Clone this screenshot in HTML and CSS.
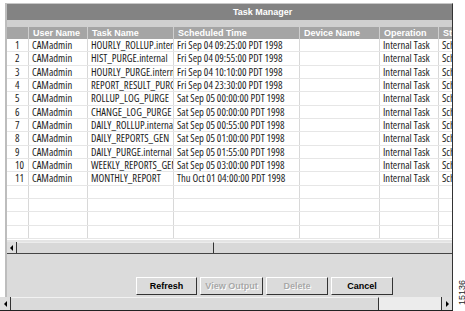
FILE: index.html
```html
<!DOCTYPE html>
<html lang="en">
<head>
    <meta charset="UTF-8">
    <title>Task Manager</title>
    <link rel="stylesheet" href="styles.css">
</head>
<body>
<div class="screen">
    <div class="frame">
        <div class="window">
            <div class="titlebar">Task Manager</div>
            <div class="strip"></div>

            <!-- task list -->
            <div class="table-view">
                <div class="row head">
                    <div class="cell"></div>
                    <div class="cell">User Name</div>
                    <div class="cell">Task Name</div>
                    <div class="cell">Scheduled Time</div>
                    <div class="cell">Device Name</div>
                    <div class="cell">Operation</div>
                    <div class="cell">Status</div>
                </div>
                <div class="row"><div class="cell num">1</div><div class="cell">CAMadmin</div><div class="cell">HOURLY_ROLLUP.internal</div><div class="cell">Fri Sep 04 09:25:00 PDT 1998</div><div class="cell"></div><div class="cell">Internal Task</div><div class="cell">Scheduled</div></div>
                <div class="row"><div class="cell num">2</div><div class="cell">CAMadmin</div><div class="cell">HIST_PURGE.internal</div><div class="cell">Fri Sep 04 09:55:00 PDT 1998</div><div class="cell"></div><div class="cell">Internal Task</div><div class="cell">Scheduled</div></div>
                <div class="row"><div class="cell num">3</div><div class="cell">CAMadmin</div><div class="cell">HOURLY_PURGE.internal</div><div class="cell">Fri Sep 04 10:10:00 PDT 1998</div><div class="cell"></div><div class="cell">Internal Task</div><div class="cell">Scheduled</div></div>
                <div class="row"><div class="cell num">4</div><div class="cell">CAMadmin</div><div class="cell">REPORT_RESULT_PURGE</div><div class="cell">Fri Sep 04 23:30:00 PDT 1998</div><div class="cell"></div><div class="cell">Internal Task</div><div class="cell">Scheduled</div></div>
                <div class="row"><div class="cell num">5</div><div class="cell">CAMadmin</div><div class="cell">ROLLUP_LOG_PURGE</div><div class="cell">Sat Sep 05 00:00:00 PDT 1998</div><div class="cell"></div><div class="cell">Internal Task</div><div class="cell">Scheduled</div></div>
                <div class="row"><div class="cell num">6</div><div class="cell">CAMadmin</div><div class="cell">CHANGE_LOG_PURGE</div><div class="cell">Sat Sep 05 00:00:00 PDT 1998</div><div class="cell"></div><div class="cell">Internal Task</div><div class="cell">Scheduled</div></div>
                <div class="row"><div class="cell num">7</div><div class="cell">CAMadmin</div><div class="cell">DAILY_ROLLUP.internal</div><div class="cell">Sat Sep 05 00:55:00 PDT 1998</div><div class="cell"></div><div class="cell">Internal Task</div><div class="cell">Scheduled</div></div>
                <div class="row"><div class="cell num">8</div><div class="cell">CAMadmin</div><div class="cell">DAILY_REPORTS_GEN</div><div class="cell">Sat Sep 05 01:00:00 PDT 1998</div><div class="cell"></div><div class="cell">Internal Task</div><div class="cell">Scheduled</div></div>
                <div class="row"><div class="cell num">9</div><div class="cell">CAMadmin</div><div class="cell">DAILY_PURGE.internal</div><div class="cell">Sat Sep 05 01:55:00 PDT 1998</div><div class="cell"></div><div class="cell">Internal Task</div><div class="cell">Scheduled</div></div>
                <div class="row"><div class="cell num">10</div><div class="cell">CAMadmin</div><div class="cell">WEEKLY_REPORTS_GEN</div><div class="cell">Sat Sep 05 03:00:00 PDT 1998</div><div class="cell"></div><div class="cell">Internal Task</div><div class="cell">Scheduled</div></div>
                <div class="row"><div class="cell num">11</div><div class="cell">CAMadmin</div><div class="cell">MONTHLY_REPORT</div><div class="cell">Thu Oct 01 04:00:00 PDT 1998</div><div class="cell"></div><div class="cell">Internal Task</div><div class="cell">Scheduled</div></div>
                <div class="row"><div class="cell"></div><div class="cell"></div><div class="cell"></div><div class="cell"></div><div class="cell"></div><div class="cell"></div><div class="cell"></div></div>
                <div class="row"><div class="cell"></div><div class="cell"></div><div class="cell"></div><div class="cell"></div><div class="cell"></div><div class="cell"></div><div class="cell"></div></div>
                <div class="row"><div class="cell"></div><div class="cell"></div><div class="cell"></div><div class="cell"></div><div class="cell"></div><div class="cell"></div><div class="cell"></div></div>
                <div class="row"><div class="cell"></div><div class="cell"></div><div class="cell"></div><div class="cell"></div><div class="cell"></div><div class="cell"></div><div class="cell"></div></div>
            </div>

            <div class="hscroll">
                <span class="arrow"><i class="tri-left"></i></span>
                <span class="thumb"></span>
                <span class="track"></span>
            </div>

            <div class="panel">
                <button class="btn">Refresh</button>
                <button class="btn" disabled>View Output</button>
                <button class="btn" disabled>Delete</button>
                <button class="btn">Cancel</button>
            </div>
        </div>

        <div class="hscroll outer">
            <span class="arrow"><i class="tri-left"></i></span>
            <span class="thumb"></span>
            <span class="track"></span>
            <span class="arrow right"><i class="tri-right"></i></span>
        </div>
    </div>
    <div class="fig-label">15136</div>
</div>
</body>
</html>
```

FILE: styles.css
```css
body {
    margin: 0;
    background: #fff;
    font-family: "Liberation Sans", Arial, sans-serif;
}

.screen {
    display: flex;
    width: 465px;
    height: 311px;
    overflow: hidden;
}

.frame {
    width: 453px;
    display: flex;
    flex-direction: column;
}

.window {
    margin: 3px 0 0 5px;
    border-top: 1px solid #c8c8c8;
    border-left: 2px solid #bdbdbd;
    border-right: 1px solid #333;
    display: flex;
    flex-direction: column;
    overflow: hidden;
}

.titlebar {
    height: 16px;
    line-height: 16px;
    padding-left: 226px;
    background: #838383;
    color: #fff;
    font-weight: bold;
    font-size: 9px;
    white-space: nowrap;
}

.strip {
    height: 7px;
    background: #d0d0d0;
}

.table-view {
    height: 213px;
    background: #fff;
    border-bottom: 2px solid #e4e4e4;
    box-sizing: content-box;
    overflow: hidden;
}

.row {
    display: grid;
    grid-template-columns: 22px 59px 86px 126px 80px 59px 80px;
    height: 13.333px;
    box-sizing: border-box;
    border-bottom: 1px solid #e6e6e6;
    width: 512px;
}

.row.head {
    height: 12px;
    background: #a5a5a5;
    border-bottom: none;
}

.cell {
    border-right: 1px solid #d8d8d8;
    padding-left: 3px;
    font-family: "Open Sans", "Liberation Sans", sans-serif;
    font-stretch: 75%;
    font-size: 10.6px;
    line-height: 13px;
    color: #1c1c1c;
    white-space: nowrap;
    overflow: hidden;
}

.cell.num {
    padding-left: 8px;
}

.head .cell {
    border-right-color: #cfcfcf;
    padding-left: 4px;
    font-family: "Liberation Sans", Arial, sans-serif;
    font-stretch: normal;
    font-weight: bold;
    font-size: 9px;
    line-height: 12px;
    color: #fff;
}

/* scroll bars */
.hscroll {
    display: flex;
    height: 12px;
    background: #d8d8d8;
    border-bottom: 1px solid #444;
    box-sizing: border-box;
}

.hscroll .arrow {
    width: 9px;
    display: flex;
    align-items: center;
    justify-content: center;
    border-right: 1px solid #333;
    background: #dedede;
}

.hscroll .thumb {
    width: 196px;
    border-right: 1px solid #333;
    border-top: 1px solid #ececec;
}

.hscroll .track {
    flex: 1;
    border-top: 1px solid #ececec;
}

.hscroll.outer {
    height: 14px;
    background: #dadada;
    border-bottom: 1px solid #222;
}

.hscroll.outer .arrow {
    width: 10px;
}

.hscroll.outer .thumb {
    width: 367px;
    border-top: 1px solid #f2f2f2;
}

.hscroll.outer .track {
    background: #ececec;
    border-top: none;
}

.hscroll.outer .arrow.right {
    width: 10px;
    border-right: 1px solid #333;
    border-left: 1px solid #333;
}

.tri-left, .tri-right {
    width: 0;
    height: 0;
    border-top: 3px solid transparent;
    border-bottom: 3px solid transparent;
}

.tri-left {
    border-right: 3px solid #000;
}

.tri-right {
    border-left: 3px solid #000;
}

/* button panel */
.panel {
    height: 43px;
    background: #dbdbdb;
    display: flex;
    align-items: flex-start;
    gap: 3px;
    padding: 23px 0 0 129px;
    box-sizing: border-box;
}

.btn {
    height: 18px;
    width: 62px;
    padding: 0;
    background: #dbdbdb;
    border: 1px solid;
    border-color: #fff #333 #333 #fff;
    font-family: "Liberation Sans", Arial, sans-serif;
    font-weight: bold;
    font-size: 9px;
    color: #000;
}

.btn:first-child {
    width: 61px;
}

.btn:nth-child(2) {
    width: 63px;
}

.btn:disabled {
    color: #a8a8a8;
    text-shadow: 1px 1px 0 #fff;
}

.fig-label {
    align-self: flex-end;
    margin: 0 0 6px 4px;
    writing-mode: vertical-rl;
    transform: rotate(180deg);
    font-size: 9px;
    color: #222;
}
```
